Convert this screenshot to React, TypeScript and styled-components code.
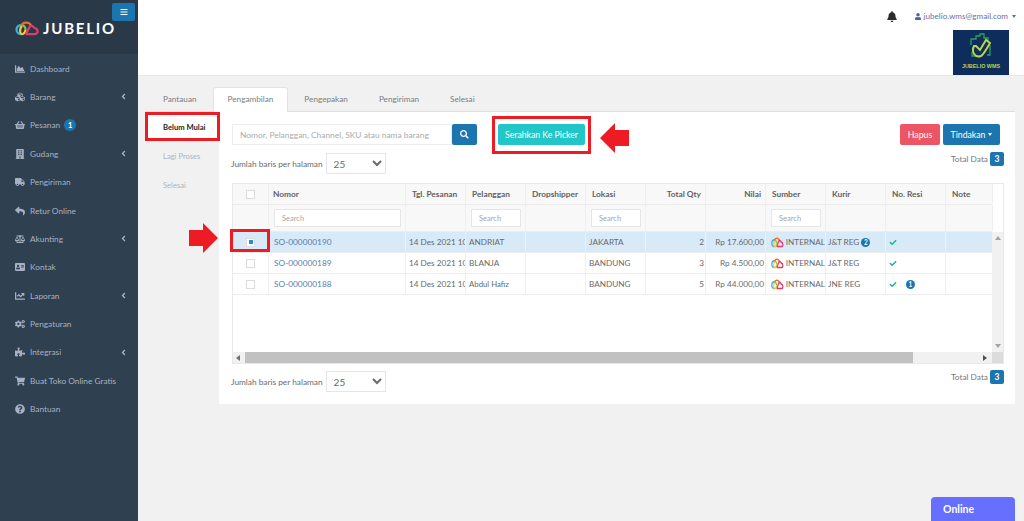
import React from "react";
import styled, { createGlobalStyle } from "styled-components";
import {
  FaAddressCard,
  FaAngleLeft,
  FaBalanceScale,
  FaBars,
  FaBell,
  FaBuilding,
  FaChartArea,
  FaChartLine,
  FaCheck,
  FaCogs,
  FaCubes,
  FaPuzzlePiece,
  FaQuestionCircle,
  FaReply,
  FaSearch,
  FaShoppingBasket,
  FaShoppingCart,
  FaTruck,
  FaUser,
} from "react-icons/fa";

const color = {
  side: "#2f4050",
  sideHead: "#2a3947",
  sideText: "#a7b1c2",
  bg: "#f1f1f1",
  line: "#e7eaec",
  text: "#676a6c",
  blue: "#1c75ae",
  red: "#ed1c24",
};

const COLS = "36px 137px repeat(9, 60px) 47px";

const Global = createGlobalStyle`
  html, body { margin: 0; padding: 0; height: 100%; overflow: hidden; }
  body { font-family: Lato, "Noto Sans", sans-serif; color: ${color.text}; background: ${color.bg}; }
  * { box-sizing: border-box; }
`;

const Page = styled.div`
  position: relative;
  display: grid;
  grid-template-columns: 138px 1fr;
  width: 1024px;
  height: 521px;
  overflow: hidden;
`;

/* sidebar */
const Sidebar = styled.aside`
  background: ${color.side};
  display: flex;
  flex-direction: column;
`;

const Brand = styled.div`
  height: 54.4px;
  background: ${color.sideHead};
  padding: 3px 3px 0 15px;
  display: flex;
  flex-direction: column;
`;

const MenuToggle = styled.button`
  align-self: flex-end;
  width: 23px;
  height: 18px;
  border: 0;
  border-radius: 2px;
  padding: 0;
  background: ${color.blue};
  color: #fff;
  font-size: 8px;
  display: flex;
  align-items: center;
  justify-content: center;
`;

const BrandRow = styled.div`
  display: flex;
  align-items: center;
  gap: 4px;
  margin-top: -2px;
`;

const BrandName = styled.span`
  color: #fff;
  font-size: 15px;
  font-weight: 700;
  letter-spacing: 1.8px;
`;

const Nav = styled.nav`
  display: flex;
  flex-direction: column;
`;

const NavItem = styled.a`
  display: flex;
  align-items: center;
  height: 28.4px;
  padding: 0 11px 0 15px;
  color: ${color.sideText};
  font-size: 8.3px;
  white-space: nowrap;

  & > svg:first-child {
    width: 10px;
    height: 10px;
    margin-right: 5px;
    flex: none;
  }
`;

const NavChevron = styled(FaAngleLeft)`
  margin-left: auto;
  width: 7px;
  height: 9px;
`;

const NavBadge = styled.span`
  margin-left: 4px;
  width: 12px;
  height: 12px;
  border-radius: 50%;
  background: ${color.blue};
  color: #fff;
  font-size: 7.5px;
  font-weight: 700;
  display: flex;
  align-items: center;
  justify-content: center;
`;

/* main */
const Main = styled.main`
  display: flex;
  flex-direction: column;
  min-width: 0;
`;

const TopBar = styled.header`
  height: 76px;
  background: #fff;
  border-bottom: 1px solid #e9e9e9;
  padding: 10px 8px 0 0;
  display: flex;
  flex-direction: column;
  align-items: flex-end;
`;

const UserRow = styled.div`
  display: flex;
  align-items: center;
  height: 13px;
  color: #6b6fa6;
  font-size: 8.1px;
  white-space: nowrap;
`;

const Bell = styled(FaBell)`
  width: 10px;
  height: 11px;
  color: #2b2b2b;
  margin-right: 18px;
`;

const UserIcon = styled(FaUser)`
  width: 6px;
  height: 7px;
  color: #4a62a8;
  margin-right: 3px;
`;

const Caret = styled.span`
  margin-left: 4px;
  border-top: 3px solid #5a6aa5;
  border-left: 2.5px solid transparent;
  border-right: 2.5px solid transparent;
`;

const WmsLogo = styled.div`
  margin: 7px 7px 0 0;
  width: 56px;
  height: 46px;
  background: #0e2c5c;
  display: flex;
  flex-direction: column;
  align-items: center;
  padding-top: 3px;
`;

const WmsText = styled.span`
  margin-top: 2px;
  color: #b9d64a;
  font-family: "Liberation Sans", sans-serif;
  font-size: 5.4px;
  font-weight: 700;
  white-space: nowrap;
`;

const Content = styled.div`
  flex: 1;
  padding: 11px 9px 0 7px;
  display: flex;
  flex-direction: column;
`;

const Tabs = styled.div`
  display: flex;
  gap: 1px;
  height: 25px;
  padding-left: 3px;
  border-bottom: 1px solid #dedede;
`;

const Tab = styled.div<{ $active?: boolean }>`
  height: 25px;
  padding: 0 14px 3px;
  display: flex;
  align-items: center;
  font-size: 8.2px;
  color: #7b7d7f;
  border-radius: 3px 3px 0 0;
  border: 1px solid ${(p) => (p.$active ? "#e2e2e2" : "transparent")};
  border-bottom: 0;
  background: ${(p) => (p.$active ? "#fff" : "transparent")};
`;

const Body = styled.div`
  display: flex;
  align-items: flex-start;
`;

const SideTabs = styled.div`
  width: 74px;
  flex: none;
  display: flex;
  flex-direction: column;
`;

const SideTab = styled.div<{ $active?: boolean }>`
  height: 29px;
  padding-left: 18px;
  display: flex;
  align-items: center;
  font-size: 7.6px;
  background: ${(p) => (p.$active ? "#fff" : "transparent")};
  color: ${(p) => (p.$active ? "#222" : "#b0b4b8")};
  font-weight: ${(p) => (p.$active ? 700 : 400)};
`;

const Panel = styled.section`
  flex: 1;
  height: 292px;
  background: #fff;
  padding: 12px 11px 0 13px;
  display: flex;
  flex-direction: column;
`;

const Toolbar = styled.div`
  display: flex;
  align-items: flex-start;
  height: 21px;
`;

const SearchInput = styled.input`
  width: 220px;
  height: 21px;
  border: 1px solid #ececec;
  padding: 0 7px;
  font-family: inherit;
  font-size: 8.4px;
  outline: 0;

  &::placeholder {
    color: #a9acae;
    opacity: 1;
  }
`;

const Button = styled.button<{ $bg: string; $w: number }>`
  width: ${(p) => p.$w}px;
  height: 21px;
  border: 0;
  border-radius: 2px;
  padding: 0;
  background: ${(p) => p.$bg};
  color: #fff;
  font-family: inherit;
  font-size: 8.7px;
  display: inline-flex;
  align-items: center;
  justify-content: center;
  gap: 3px;
`;

const HandOver = styled(Button)`
  margin-left: 21px;
`;

const Actions = styled.div`
  margin-left: auto;
  margin-right: 4px;
  display: flex;
  gap: 3px;
`;

const WhiteCaret = styled.span`
  border-top: 3px solid #fff;
  border-left: 2.5px solid transparent;
  border-right: 2.5px solid transparent;
`;

const PagerRow = styled.div<{ $top: number; $h: number }>`
  margin-top: ${(p) => p.$top}px;
  height: ${(p) => p.$h}px;
  display: flex;
  align-items: flex-start;
  justify-content: space-between;
`;

const PagerLeft = styled.div`
  display: flex;
  align-items: center;
  gap: 3px;
  font-size: 8.3px;
  white-space: nowrap;
  margin-left: -1px;
`;

const PageSelect = styled.select`
  width: 60px;
  height: 21px;
  border: 1px solid #e5e6e7;
  background: #fff;
  padding-left: 3px;
  color: ${color.text};
  font-family: inherit;
  font-size: 10px;
  outline: 0;
`;

const TotalData = styled.div`
  display: flex;
  align-items: center;
  gap: 2px;
  margin-top: -1px;
  font-size: 8.3px;
  color: #777;
`;

const TotalBadge = styled.span`
  width: 14px;
  height: 14px;
  border-radius: 2px;
  background: ${color.blue};
  color: #fff;
  font-size: 8.5px;
  font-weight: 700;
  display: flex;
  align-items: center;
  justify-content: center;
`;

/* grid table */
const Table = styled.div`
  height: 181px;
  border: 1px solid ${color.line};
  display: flex;
  flex-direction: column;
`;

const Row = styled.div<{ $h: number; $bg: string }>`
  display: grid;
  grid-template-columns: ${COLS};
  width: 759px;
  height: ${(p) => p.$h}px;
  background: ${(p) => p.$bg};
  border-bottom: 1px solid #ededed;
  flex: none;
`;

const HeadCell = styled.div<{ $right?: boolean; $pad?: number }>`
  display: flex;
  align-items: center;
  justify-content: ${(p) => (p.$right ? "flex-end" : "flex-start")};
  padding: 0 4px 0 ${(p) => p.$pad ?? 6}px;
  border-right: 1px solid #efefef;
  font-size: 8.3px;
  font-weight: 700;
  color: #5f6163;
  white-space: nowrap;
  overflow: hidden;
`;

const FilterCell = styled.div`
  display: flex;
  align-items: center;
  padding: 0 4px 0 5px;
  border-right: 1px solid #efefef;
`;

const FilterInput = styled.input`
  width: 100%;
  height: 18px;
  border: 1px solid #e5e6e7;
  padding: 0 7px;
  font-family: inherit;
  font-size: 7.5px;
  outline: 0;

  &::placeholder {
    color: #a5a7a9;
    opacity: 1;
  }
`;

const CheckCell = styled.div`
  display: flex;
  align-items: center;
  justify-content: center;
  border-right: 1px solid #efefef;
`;

const Checkbox = styled.span<{ $checked?: boolean }>`
  width: 9px;
  height: 9px;
  background: #fff;
  border: 1px solid #dcdcdc;
  display: flex;
  align-items: center;
  justify-content: center;

  &::after {
    content: "";
    width: 4px;
    height: 4px;
    background: ${(p) => (p.$checked ? "#1b8fe0" : "transparent")};
  }
`;

const Cell = styled.div<{ $right?: boolean; $pad?: number; $small?: boolean }>`
  display: flex;
  align-items: center;
  justify-content: ${(p) => (p.$right ? "flex-end" : "flex-start")};
  padding: 0 ${(p) => (p.$right ? 1 : 0)}px 0 ${(p) => p.$pad ?? 3}px;
  border-right: 1px solid #efefef;
  font-size: ${(p) => (p.$small ? 7.8 : 8.2)}px;
  color: ${color.text};
  white-space: nowrap;
  overflow: hidden;
`;

const OrderLink = styled.a`
  color: #5b80aa;
  font-size: 8.3px;
`;

const MiniBadge = styled.span<{ $gap: number }>`
  margin-left: ${(p) => p.$gap}px;
  flex: none;
  width: 9px;
  height: 9px;
  border-radius: 50%;
  background: ${color.blue};
  color: #fff;
  font-size: 6.5px;
  font-weight: 700;
  display: flex;
  align-items: center;
  justify-content: center;
`;

const Tick = styled(FaCheck)`
  width: 8px;
  height: 7px;
  color: #1ab394;
  flex: none;
`;

const TableBody = styled.div`
  flex: 1;
  min-height: 0;
  display: flex;
`;

const Rows = styled.div`
  width: 759px;
  flex: none;
`;

const VScroll = styled.div`
  width: 11px;
  background: #f1f1f1;
  display: flex;
  flex-direction: column;
  align-items: center;
  justify-content: space-between;
  padding: 4px 0;
`;

const ArrowUp = styled.span`
  border-bottom: 4px solid #a3a3a3;
  border-left: 3px solid transparent;
  border-right: 3px solid transparent;
`;

const ArrowDown = styled.span`
  border-top: 4px solid #a3a3a3;
  border-left: 3px solid transparent;
  border-right: 3px solid transparent;
`;

const HScroll = styled.div`
  height: 11px;
  flex: none;
  background: #f1f1f1;
  display: flex;
  align-items: center;
`;

const ArrowLeft = styled.span`
  margin-left: 3px;
  border-right: 4px solid #6f6f6f;
  border-top: 3px solid transparent;
  border-bottom: 3px solid transparent;
`;

const ArrowRight = styled.span`
  margin-right: 5px;
  border-left: 4px solid #505050;
  border-top: 3px solid transparent;
  border-bottom: 3px solid transparent;
`;

const Thumb = styled.div`
  margin-left: 5px;
  width: 668px;
  height: 11px;
  background: #c1c1c1;
`;

const HSpacer = styled.div`
  flex: 1;
`;

const Corner = styled.div`
  width: 11px;
  height: 11px;
  background: #dcdcdc;
`;

/* overlays: the red marks drawn on top of the screenshot and the chat tab */
const RedBox = styled.div<{ $x: number; $y: number; $w: number; $h: number }>`
  position: absolute;
  left: ${(p) => p.$x}px;
  top: ${(p) => p.$y}px;
  width: ${(p) => p.$w}px;
  height: ${(p) => p.$h}px;
  border: 3px solid ${color.red};
  pointer-events: none;
`;

const ArrowMark = styled.svg<{ $x: number; $y: number }>`
  position: absolute;
  left: ${(p) => p.$x}px;
  top: ${(p) => p.$y}px;
  width: 30px;
  height: 30px;
`;

const OnlineTab = styled.div`
  position: absolute;
  left: 931px;
  top: 497px;
  width: 84px;
  height: 24px;
  padding-left: 12px;
  border-radius: 4px 4px 0 0;
  background: #666fff;
  color: #fff;
  font-size: 10.5px;
  font-weight: 700;
  display: flex;
  align-items: center;
`;

const CloudLogo: React.FC<{ w: number; h: number }> = ({ w, h }) => (
  <svg width={w} height={h} viewBox="0 0 48 30" preserveAspectRatio="none" fill="none" strokeWidth="4.5">
    <path d="M12 26C6 26 3 21 3 17C3 11 8 8 13 8" stroke="#35b4e0" />
    <path d="M13 8C17 8 21 12 21 17" stroke="#7fc24a" />
    <path d="M21 17C21 23 17 27 13 26C9 24 9 14 14 10" stroke="#f4c92f" />
    <path d="M13 9C15 3 28 0 32 9" stroke="#f0692c" />
    <path d="M32 9C29 11 27 16 25 20C23 24 22 26 24 26H40C47 26 47 15 39 14C37 11 35 9 32 9" stroke="#e23a6e" />
  </svg>
);

type Order = {
  no: string;
  customer: string;
  small?: boolean;
  city: string;
  qty: number;
  total: string;
  courier: string;
  courierBadge?: string;
  resiBadge?: string;
  selected?: boolean;
};

const orders: Order[] = [
  { no: "SO-000000190", customer: "ANDRIAT", city: "JAKARTA", qty: 2, total: "Rp 17.600,00", courier: "J&T REG", courierBadge: "2", selected: true },
  { no: "SO-000000189", customer: "BLANJA", city: "BANDUNG", qty: 3, total: "Rp 4.500,00", courier: "J&T REG" },
  { no: "SO-000000188", customer: "Abdul Hafiz", small: true, city: "BANDUNG", qty: 5, total: "Rp 44.000,00", courier: "JNE REG", resiBadge: "1" },
];

const menu = [
  { icon: <FaChartArea />, label: "Dashboard" },
  { icon: <FaCubes />, label: "Barang", sub: true },
  { icon: <FaShoppingBasket />, label: "Pesanan", badge: "1" },
  { icon: <FaBuilding />, label: "Gudang", sub: true },
  { icon: <FaTruck />, label: "Pengiriman" },
  { icon: <FaReply />, label: "Retur Online" },
  { icon: <FaBalanceScale />, label: "Akunting", sub: true },
  { icon: <FaAddressCard />, label: "Kontak" },
  { icon: <FaChartLine />, label: "Laporan", sub: true },
  { icon: <FaCogs />, label: "Pengaturan" },
  { icon: <FaPuzzlePiece />, label: "Integrasi", sub: true },
  { icon: <FaShoppingCart />, label: "Buat Toko Online Gratis" },
  { icon: <FaQuestionCircle />, label: "Bantuan" },
];

const Pager: React.FC = () => (
  <PagerLeft>
    Jumlah baris per halaman
    <PageSelect defaultValue="25">
      <option>25</option>
      <option>50</option>
    </PageSelect>
  </PagerLeft>
);

const Total: React.FC = () => (
  <TotalData>
    Total Data
    <TotalBadge>3</TotalBadge>
  </TotalData>
);

const App: React.FC = () => (
  <Page>
    <Global />
    <Sidebar>
      <Brand>
        <MenuToggle aria-label="menu">
          <FaBars />
        </MenuToggle>
        <BrandRow>
          <CloudLogo w={24} h={15} />
          <BrandName>JUBELIO</BrandName>
        </BrandRow>
      </Brand>
      <Nav>
        {menu.map((m) => (
          <NavItem key={m.label}>
            {m.icon}
            {m.label}
            {m.badge && <NavBadge>{m.badge}</NavBadge>}
            {m.sub && <NavChevron />}
          </NavItem>
        ))}
      </Nav>
    </Sidebar>

    <Main>
      <TopBar>
        <UserRow>
          <Bell />
          <UserIcon />
          jubelio.wms@gmail.com
          <Caret />
        </UserRow>
        <WmsLogo>
          <svg width="26" height="28" viewBox="0 0 26 28" fill="none">
            <path d="M3 12V6H8V3H12V1H16V5H20V9M22 12V22H19M4 19V23H8" stroke="#2f9e5f" strokeWidth="1.3" />
            <path d="M6 13C3 19 7 25 13 23C15 22 17 19 22 10L18 7L12 17L8 13Z" stroke="#b9d64a" strokeWidth="2" />
          </svg>
          <WmsText>JUBELIO WMS</WmsText>
        </WmsLogo>
      </TopBar>

      <Content>
        <Tabs>
          <Tab>Pantauan</Tab>
          <Tab $active>Pengambilan</Tab>
          <Tab>Pengepakan</Tab>
          <Tab>Pengiriman</Tab>
          <Tab>Selesai</Tab>
        </Tabs>
        <Body>
          <SideTabs>
            <SideTab $active>Belum Mulai</SideTab>
            <SideTab>Lagi Proses</SideTab>
            <SideTab>Selesai</SideTab>
          </SideTabs>
          <Panel>
            <Toolbar>
              <SearchInput placeholder="Nomor, Pelanggan, Channel, SKU atau nama barang" />
              <Button $bg={color.blue} $w={25} aria-label="cari">
                <FaSearch />
              </Button>
              <HandOver $bg="#23c6c8" $w={87}>Serahkan Ke Picker</HandOver>
              <Actions>
                <Button $bg="#ed5565" $w={40}>Hapus</Button>
                <Button $bg={color.blue} $w={57}>
                  Tindakan <WhiteCaret />
                </Button>
              </Actions>
            </Toolbar>
            <PagerRow $top={8} $h={30}>
              <Pager />
              <Total />
            </PagerRow>
            <Table>
              <Row $h={21} $bg="#f8f8f8">
                <CheckCell><Checkbox /></CheckCell>
                <HeadCell $pad={4}>Nomor</HeadCell>
                <HeadCell>Tgl. Pesanan</HeadCell>
                <HeadCell>Pelanggan</HeadCell>
                <HeadCell>Dropshipper</HeadCell>
                <HeadCell>Lokasi</HeadCell>
                <HeadCell $right>Total Qty</HeadCell>
                <HeadCell $right>Nilai</HeadCell>
                <HeadCell>Sumber</HeadCell>
                <HeadCell>Kurir</HeadCell>
                <HeadCell>No. Resi</HeadCell>
                <HeadCell>Note</HeadCell>
              </Row>
              <Row $h={27} $bg="#f8f8f8">
                <FilterCell />
                <FilterCell><FilterInput placeholder="Search" /></FilterCell>
                <FilterCell />
                <FilterCell><FilterInput placeholder="Search" /></FilterCell>
                <FilterCell />
                <FilterCell><FilterInput placeholder="Search" /></FilterCell>
                <FilterCell />
                <FilterCell />
                <FilterCell><FilterInput placeholder="Search" /></FilterCell>
                <FilterCell />
                <FilterCell />
                <FilterCell />
              </Row>
              <TableBody>
                <Rows>
                  {orders.map((o) => (
                    <Row key={o.no} $h={21} $bg={o.selected ? "#d8e9f8" : "#fff"}>
                      <CheckCell><Checkbox $checked={o.selected} /></CheckCell>
                      <Cell $pad={5}><OrderLink>{o.no}</OrderLink></Cell>
                      <Cell>14 Des 2021 10:00</Cell>
                      <Cell $small={o.small}>{o.customer}</Cell>
                      <Cell />
                      <Cell>{o.city}</Cell>
                      <Cell $right>{o.qty}</Cell>
                      <Cell $right>{o.total}</Cell>
                      <Cell $pad={5}>
                        <CloudLogo w={13} h={11} />
                        &nbsp;INTERNAL
                      </Cell>
                      <Cell $pad={2}>
                        {o.courier}
                        {o.courierBadge && <MiniBadge $gap={2}>{o.courierBadge}</MiniBadge>}
                      </Cell>
                      <Cell>
                        <Tick />
                        {o.resiBadge && <MiniBadge $gap={9}>{o.resiBadge}</MiniBadge>}
                      </Cell>
                      <Cell />
                    </Row>
                  ))}
                </Rows>
                <VScroll>
                  <ArrowUp />
                  <ArrowDown />
                </VScroll>
              </TableBody>
              <HScroll>
                <ArrowLeft />
                <Thumb />
                <HSpacer />
                <ArrowRight />
                <Corner />
              </HScroll>
            </Table>
            <PagerRow $top={7} $h={21}>
              <Pager />
              <Total />
            </PagerRow>
          </Panel>
        </Body>
      </Content>
    </Main>

    <RedBox $x={145} $y={112} $w={75} $h={29} />
    <RedBox $x={492} $y={116} $w={99} $h={38} />
    <RedBox $x={230} $y={229} $w={40} $h={23} />
    <ArrowMark $x={600} $y={123} viewBox="0 0 30 30">
      <path d="M0 15L15 0V7H29V23H15V30Z" fill={color.red} />
    </ArrowMark>
    <ArrowMark $x={188} $y={223} viewBox="0 0 30 30">
      <path d="M30 15L15 0V7H1V23H15V30Z" fill={color.red} />
    </ArrowMark>
    <OnlineTab>Online</OnlineTab>
  </Page>
);

export default App;
